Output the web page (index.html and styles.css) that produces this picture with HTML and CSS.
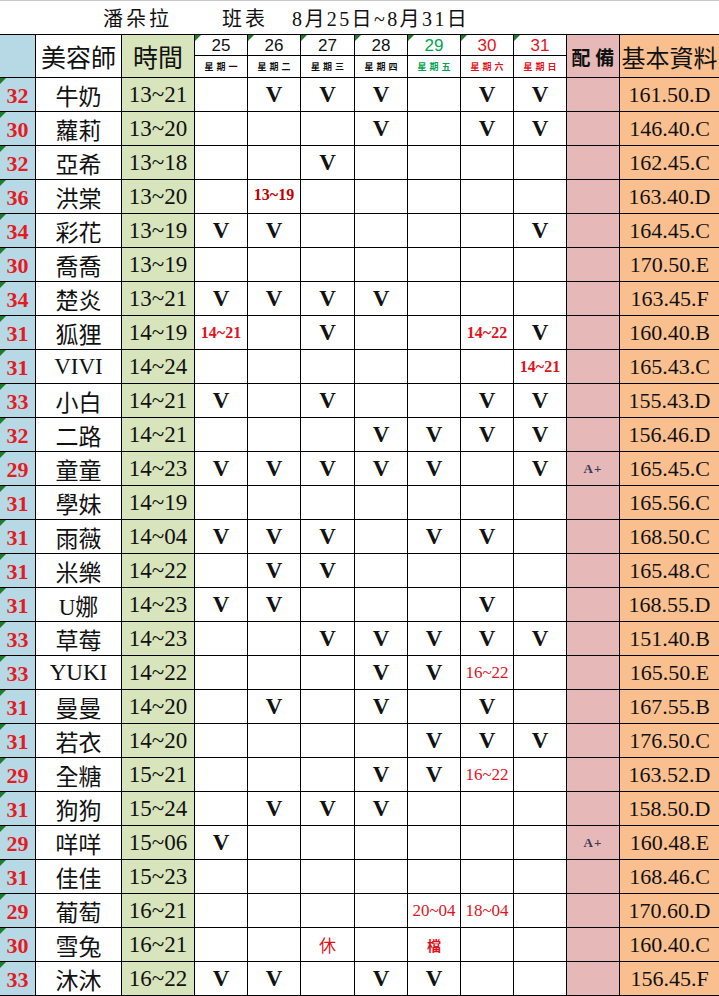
FILE: index.html
```html
<!DOCTYPE html>
<html lang="zh-Hant">
<head>
<meta charset="utf-8">
<title>潘朵拉 班表</title>
<link rel="stylesheet" href="styles.css">
</head>
<body>
<div class="sheet">
  <div class="title"><span class="t1">潘朵拉</span><span class="t2">班表</span><span class="t3">8月25日~8月31日</span></div>
  <div class="grid">
    <div class="h hn"></div>
    <div class="h hname">美容師</div>
    <div class="h htime">時間</div>
    <div class="dn tri">25</div>
    <div class="dn tri">26</div>
    <div class="dn tri">27</div>
    <div class="dn tri">28</div>
    <div class="dn tri green">29</div>
    <div class="dn tri red">30</div>
    <div class="dn tri red">31</div>
    <div class="h hpb">配 備</div>
    <div class="h hinfo">基本資料</div>
    <div class="wd">星期一</div>
    <div class="wd">星期二</div>
    <div class="wd">星期三</div>
    <div class="wd">星期四</div>
    <div class="wd green">星期五</div>
    <div class="wd red">星期六</div>
    <div class="wd red">星期日</div>

    <div class="n tri">32</div><div class="name">牛奶</div><div class="time">13~21</div><div class="d"></div><div class="d v">V</div><div class="d v">V</div><div class="d v">V</div><div class="d"></div><div class="d v">V</div><div class="d v">V</div><div class="pb"></div><div class="info">161.50.D</div>
    <div class="n tri">30</div><div class="name">蘿莉</div><div class="time">13~20</div><div class="d"></div><div class="d"></div><div class="d"></div><div class="d v">V</div><div class="d"></div><div class="d v">V</div><div class="d v">V</div><div class="pb"></div><div class="info">146.40.C</div>
    <div class="n tri">32</div><div class="name">亞希</div><div class="time">13~18</div><div class="d"></div><div class="d"></div><div class="d v">V</div><div class="d"></div><div class="d"></div><div class="d"></div><div class="d"></div><div class="pb"></div><div class="info">162.45.C</div>
    <div class="n tri">36</div><div class="name">洪棠</div><div class="time">13~20</div><div class="d"></div><div class="d rd">13~19</div><div class="d"></div><div class="d"></div><div class="d"></div><div class="d"></div><div class="d"></div><div class="pb"></div><div class="info">163.40.D</div>
    <div class="n tri">34</div><div class="name">彩花</div><div class="time">13~19</div><div class="d v">V</div><div class="d v">V</div><div class="d"></div><div class="d"></div><div class="d"></div><div class="d"></div><div class="d v">V</div><div class="pb"></div><div class="info">164.45.C</div>
    <div class="n tri">30</div><div class="name">喬喬</div><div class="time">13~19</div><div class="d"></div><div class="d"></div><div class="d"></div><div class="d"></div><div class="d"></div><div class="d"></div><div class="d"></div><div class="pb"></div><div class="info">170.50.E</div>
    <div class="n tri">34</div><div class="name">楚炎</div><div class="time">13~21</div><div class="d v">V</div><div class="d v">V</div><div class="d v">V</div><div class="d v">V</div><div class="d"></div><div class="d"></div><div class="d"></div><div class="pb"></div><div class="info">163.45.F</div>
    <div class="n tri">31</div><div class="name">狐狸</div><div class="time">14~19</div><div class="d rb">14~21</div><div class="d"></div><div class="d v">V</div><div class="d"></div><div class="d"></div><div class="d rb">14~22</div><div class="d v">V</div><div class="pb"></div><div class="info">160.40.B</div>
    <div class="n tri">31</div><div class="name">VIVI</div><div class="time">14~24</div><div class="d"></div><div class="d"></div><div class="d"></div><div class="d"></div><div class="d"></div><div class="d"></div><div class="d rb">14~21</div><div class="pb"></div><div class="info">165.43.C</div>
    <div class="n tri">33</div><div class="name">小白</div><div class="time">14~21</div><div class="d v">V</div><div class="d"></div><div class="d v">V</div><div class="d"></div><div class="d"></div><div class="d v">V</div><div class="d v">V</div><div class="pb"></div><div class="info">155.43.D</div>
    <div class="n tri">32</div><div class="name">二路</div><div class="time">14~21</div><div class="d"></div><div class="d"></div><div class="d"></div><div class="d v">V</div><div class="d v">V</div><div class="d v">V</div><div class="d v">V</div><div class="pb"></div><div class="info">156.46.D</div>
    <div class="n tri">29</div><div class="name">童童</div><div class="time">14~23</div><div class="d v">V</div><div class="d v">V</div><div class="d v">V</div><div class="d v">V</div><div class="d v">V</div><div class="d"></div><div class="d v">V</div><div class="pb ap">A+</div><div class="info">165.45.C</div>
    <div class="n tri">31</div><div class="name">學妹</div><div class="time">14~19</div><div class="d"></div><div class="d"></div><div class="d"></div><div class="d"></div><div class="d"></div><div class="d"></div><div class="d"></div><div class="pb"></div><div class="info">165.56.C</div>
    <div class="n tri">31</div><div class="name">雨薇</div><div class="time">14~04</div><div class="d v">V</div><div class="d v">V</div><div class="d v">V</div><div class="d"></div><div class="d v">V</div><div class="d v">V</div><div class="d"></div><div class="pb"></div><div class="info">168.50.C</div>
    <div class="n tri">31</div><div class="name">米樂</div><div class="time">14~22</div><div class="d"></div><div class="d v">V</div><div class="d v">V</div><div class="d"></div><div class="d"></div><div class="d"></div><div class="d"></div><div class="pb"></div><div class="info">165.48.C</div>
    <div class="n tri">31</div><div class="name">U娜</div><div class="time">14~23</div><div class="d v">V</div><div class="d v">V</div><div class="d"></div><div class="d"></div><div class="d"></div><div class="d v">V</div><div class="d"></div><div class="pb"></div><div class="info">168.55.D</div>
    <div class="n tri">33</div><div class="name">草莓</div><div class="time">14~23</div><div class="d"></div><div class="d"></div><div class="d v">V</div><div class="d v">V</div><div class="d v">V</div><div class="d v">V</div><div class="d v">V</div><div class="pb"></div><div class="info">151.40.B</div>
    <div class="n tri">33</div><div class="name">YUKI</div><div class="time">14~22</div><div class="d"></div><div class="d"></div><div class="d"></div><div class="d v">V</div><div class="d v">V</div><div class="d rn">16~22</div><div class="d"></div><div class="pb"></div><div class="info">165.50.E</div>
    <div class="n tri">31</div><div class="name">曼曼</div><div class="time">14~20</div><div class="d"></div><div class="d v">V</div><div class="d"></div><div class="d v">V</div><div class="d"></div><div class="d v">V</div><div class="d"></div><div class="pb"></div><div class="info">167.55.B</div>
    <div class="n tri">31</div><div class="name">若衣</div><div class="time">14~20</div><div class="d"></div><div class="d"></div><div class="d"></div><div class="d"></div><div class="d v">V</div><div class="d v">V</div><div class="d v">V</div><div class="pb"></div><div class="info">176.50.C</div>
    <div class="n tri">29</div><div class="name">全糖</div><div class="time">15~21</div><div class="d"></div><div class="d"></div><div class="d"></div><div class="d v">V</div><div class="d v">V</div><div class="d rn">16~22</div><div class="d"></div><div class="pb"></div><div class="info">163.52.D</div>
    <div class="n tri">31</div><div class="name">狗狗</div><div class="time">15~24</div><div class="d"></div><div class="d v">V</div><div class="d v">V</div><div class="d v">V</div><div class="d"></div><div class="d"></div><div class="d"></div><div class="pb"></div><div class="info">158.50.D</div>
    <div class="n tri">29</div><div class="name">咩咩</div><div class="time">15~06</div><div class="d v">V</div><div class="d"></div><div class="d"></div><div class="d"></div><div class="d"></div><div class="d"></div><div class="d"></div><div class="pb ap">A+</div><div class="info">160.48.E</div>
    <div class="n tri">31</div><div class="name">佳佳</div><div class="time">15~23</div><div class="d"></div><div class="d"></div><div class="d"></div><div class="d"></div><div class="d"></div><div class="d"></div><div class="d"></div><div class="pb"></div><div class="info">168.46.C</div>
    <div class="n tri">29</div><div class="name">葡萄</div><div class="time">16~21</div><div class="d"></div><div class="d"></div><div class="d"></div><div class="d"></div><div class="d rn">20~04</div><div class="d rn">18~04</div><div class="d"></div><div class="pb"></div><div class="info">170.60.D</div>
    <div class="n tri">30</div><div class="name">雪兔</div><div class="time">16~21</div><div class="d"></div><div class="d"></div><div class="d rk">休</div><div class="d"></div><div class="d rkb">檔</div><div class="d"></div><div class="d"></div><div class="pb"></div><div class="info">160.40.C</div>
    <div class="n tri">33</div><div class="name">沐沐</div><div class="time">16~22</div><div class="d v">V</div><div class="d v">V</div><div class="d"></div><div class="d v">V</div><div class="d v">V</div><div class="d"></div><div class="d"></div><div class="pb"></div><div class="info">156.45.F</div>
  </div>
</div>
</body>
</html>
```
FILE: styles.css
```css
* { box-sizing: border-box; }
html, body { margin: 0; padding: 0; background: #fff; }
body {
  font-family: "Liberation Serif", "Noto Sans CJK TC", serif;
  color: #111;
  width: 719px;
  height: 996px;
  overflow: hidden;
}
.sheet { width: 719px; }
.title {
  height: 35px;
  border-top: 1px solid #c8c8c8;
  border-bottom: 1px solid #000;
  display: flex;
  align-items: center;
  padding-left: 103px;
  font-size: 20px;
  letter-spacing: 3px;
  white-space: nowrap;
}
.title .t2 { margin-left: 50px; }
.title .t3 { margin-left: 24px; letter-spacing: 2.4px; }

.grid {
  display: grid;
  grid-template-columns: 36px 86px 73px 53px 53px 54px 53px 53px 53px 53px 53px 99px;
  grid-template-rows: 21px 22px;
  grid-auto-rows: 34px;
}
.grid > div {
  border-right: 1px solid #000;
  border-bottom: 1px solid #000;
  display: flex;
  align-items: center;
  justify-content: center;
  position: relative;
  white-space: nowrap;
}
.grid > .info { border-right: none; }

.h { grid-row: span 2; }
.hn { background: #b7d9e6; }
.hname { font-size: 25px; }
.htime { font-size: 25px; background: #d8e4bc; }
.hpb { background: #e6b8b7; font-size: 19px; font-weight: bold; }
.hinfo { background: #fabf8f; font-size: 24px; border-right: none !important; }

.dn {
  font-family: "Liberation Sans", "Noto Sans CJK TC", sans-serif;
  font-size: 17px;
  padding-top: 2px;
}
.wd {
  font-size: 9px;
  font-weight: bold;
  letter-spacing: 3px;
  padding-left: 3px;
}
.green { color: #00a54f; }
.red { color: #e0141c; }

.tri::before {
  content: "";
  position: absolute;
  left: 0;
  top: 0;
  border-top: 6px solid #1f7a2a;
  border-right: 6px solid transparent;
}

.n {
  background: #b7d9e6;
  color: #e31b23;
  font-weight: bold;
  font-size: 22px;
  padding-top: 2px;
}
.name { font-size: 23px; }
.time { background: #d8e4bc; font-size: 23px; }
.v { font-size: 23px; font-weight: bold; }
.pb { background: #e6b8b7; }
.ap { font-size: 13px; font-weight: bold; color: #3a3a58; letter-spacing: 1px; }
.info { background: #fabf8f; font-size: 22px; }

.rb { color: #e0141c; font-weight: bold; font-size: 16px; }
.rd { color: #c00000; font-weight: bold; font-size: 16px; padding-bottom: 3px; }
.rn { color: #e0141c; font-size: 17px; }
.rk { color: #e0141c; font-size: 17px; }
.rkb { color: #e0141c; font-size: 14px; font-weight: bold; }
```
